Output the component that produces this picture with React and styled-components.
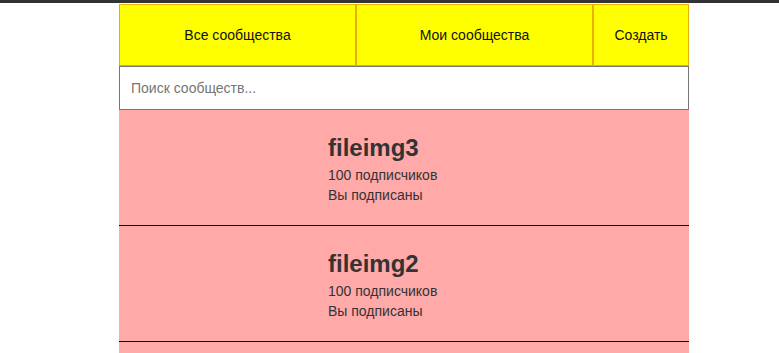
import React, { useState } from "react";
import styled, { createGlobalStyle } from "styled-components";

const GlobalStyle = createGlobalStyle`
  body {
    margin: 0;
    background: #fff;
    font-family: "Liberation Sans", Arial, sans-serif;
  }
`;

const communities = [
  { name: "fileimg3", subs: 100, subscribed: true },
  { name: "fileimg2", subs: 100, subscribed: true },
  { name: "fileimg1", subs: 100, subscribed: true },
];

const App = () => {
  const [query, setQuery] = useState("");

  return (
    <>
      <GlobalStyle />
      <TopBar />
      <Container>
        <Tabs>
          <Tab>Все сообщества</Tab>
          <Tab>Мои сообщества</Tab>
          <Tab narrow>Создать</Tab>
        </Tabs>
        <Search
          placeholder="Поиск сообществ..."
          value={query}
          onChange={(e) => setQuery(e.target.value)}
        />
        <List>
          {communities.map((c) => (
            <Item key={c.name}>
              <Info>
                <Name>{c.name}</Name>
                <Line>{c.subs} подписчиков</Line>
                {c.subscribed && <Line>Вы подписаны</Line>}
              </Info>
            </Item>
          ))}
        </List>
      </Container>
    </>
  );
};

export default App;

const TopBar = styled.div`
  height: 3px;
  background: #333;
`;

const Container = styled.div`
  width: 570px;
  margin: 1px 0 0 119px;
`;

const Tabs = styled.div`
  display: flex;
  height: 62px;
`;

const Tab = styled.div`
  flex: ${(p) => (p.narrow ? "0 0 96px" : "0 0 237px")};
  box-sizing: border-box;
  background: #ffff00;
  border: 1px solid #e8b000;
  display: flex;
  justify-content: center;
  align-items: center;
  font-size: 14px;
  color: #111;
  cursor: pointer;
`;

const Search = styled.input`
  display: block;
  width: 100%;
  box-sizing: border-box;
  height: 44px;
  margin: 0;
  padding: 0 11px;
  border: 1px solid #767676;
  font-family: "Liberation Sans", Arial, sans-serif;
  font-size: 14px;
  outline: none;

  ::placeholder {
    color: #757575;
  }
`;

const List = styled.div`
  display: flex;
  flex-direction: column;
`;

const Item = styled.div`
  height: 116px;
  box-sizing: border-box;
  background: #ffa9a9;
  border-bottom: 1px solid #000;
  padding: 24px 0 0 209px;
`;

const Info = styled.div`
  color: #333;
`;

const Name = styled.div`
  font-size: 24px;
  font-weight: bold;
  line-height: 28px;
  margin-bottom: 3px;
`;

const Line = styled.div`
  font-size: 14px;
  line-height: 20px;
`;
